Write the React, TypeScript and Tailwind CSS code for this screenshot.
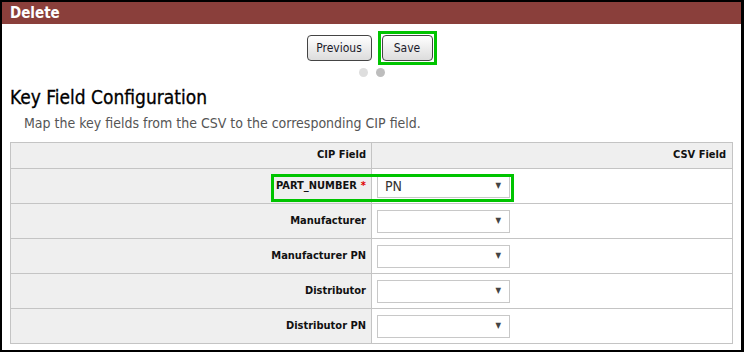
import React from 'react';

const font = { fontFamily: '"DejaVu Sans Condensed", "DejaVu Sans", sans-serif' };

const rows = [
  { label: 'PART_NUMBER', required: true, value: 'PN' },
  { label: 'Manufacturer', required: false, value: '' },
  { label: 'Manufacturer PN', required: false, value: '' },
  { label: 'Distributor', required: false, value: '' },
  { label: 'Distributor PN', required: false, value: '' },
];

function Select({ value }: { value: string }) {
  return (
    <div className="flex h-[23px] w-[133px] items-center justify-between border border-[#c8c8c8] bg-white pl-[7px] pr-[8px]">
      <span className="text-[14px] text-[#333]">{value}</span>
      <span className="text-[8px] text-[#444]">▼</span>
    </div>
  );
}

function App() {
  return (
    <div
      className="h-[352px] w-[744px] overflow-hidden border-2 border-r-[3px] border-black bg-white text-[#111]"
      style={font}
    >
      <div className="flex h-[22px] items-center bg-[#8a3f3b] px-[8px] text-[15px] font-bold text-white">
        Delete
      </div>

      <div className="mt-[7px] flex items-center justify-center gap-[6px]">
        <button className="h-[26px] w-[65px] rounded-[4px] border border-[#444] bg-gradient-to-b from-white to-[#dcdcdc] text-[12px] text-[#1a1a2a]">
          Previous
        </button>
        <span className="border-[3px] border-[#00c400] p-[1px]">
          <button className="block h-[26px] w-[51px] rounded-[4px] border border-[#444] bg-gradient-to-b from-white to-[#dcdcdc] text-[12px] text-[#1a1a2a]">
            Save
          </button>
        </span>
      </div>

      <div className="mt-[3px] flex justify-center gap-[8px]">
        <span className="h-[9px] w-[9px] rounded-full bg-[#dedede]" />
        <span className="h-[9px] w-[9px] rounded-full bg-[#bdbdbd]" />
      </div>

      <div className="px-[8px]">
        <h1 className="mt-[9px] text-[19px] leading-[22px] text-black [-webkit-text-stroke:0.3px_black]">
          Key Field Configuration
        </h1>
        <p className="mt-[7px] pl-[14px] text-[14px] leading-[16px] text-[#555]">
          Map the key fields from the CSV to the corresponding CIP field.
        </p>

        <div className="relative mt-[11px] grid w-[723px] grid-cols-[361px_1fr] border-l border-t border-[#c4c4c4] text-[11px] font-bold">
          <div className="flex h-[26px] items-center justify-end border-b border-r border-[#c4c4c4] bg-[#efefef] pr-[5px]">
            CIP Field
          </div>
          <div className="flex h-[26px] items-center justify-end border-b border-r border-[#c4c4c4] bg-[#efefef] pr-[6px]">
            CSV Field
          </div>
          {rows.map((row) => (
            <React.Fragment key={row.label}>
              <div className="flex h-[35px] items-center justify-end border-b border-r border-[#c4c4c4] bg-[#efefef] pr-[5px]">
                {row.label}
                {row.required && <span className="ml-[4px] text-[#e00000]">*</span>}
              </div>
              <div className="flex h-[35px] items-center border-b border-r border-[#c4c4c4] bg-white pl-[5px] font-normal">
                <Select value={row.value} />
              </div>
            </React.Fragment>
          ))}
          <div className="pointer-events-none absolute left-[260px] top-[31px] h-[28px] w-[243px] border-[3px] border-[#00c400]" />
        </div>
      </div>
    </div>
  );
}

export default App;
